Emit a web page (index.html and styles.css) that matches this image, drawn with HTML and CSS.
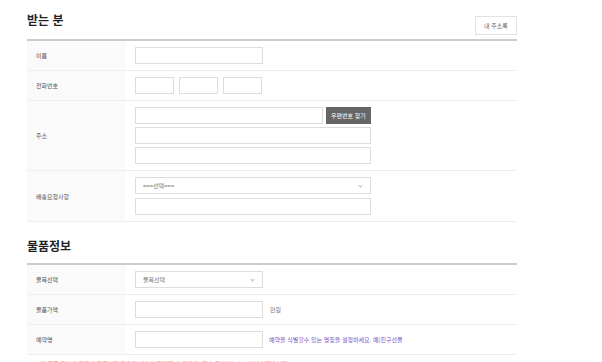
FILE: index.html
```html
<!DOCTYPE html>
<html lang="ko">
<head>
    <meta charset="UTF-8">
    <meta name="viewport" content="width=device-width, initial-scale=1.0">
    <title>받는 분</title>
    <link rel="stylesheet" href="styles.css">
</head>
<body>

    <div class="wrap">
        <div class="sec-head">
            <h2>받는 분</h2>
            <button class="btn-line">내 주소록</button>
        </div>

        <div class="form-table">
            <div class="row">
                <div class="label">이름</div>
                <div class="field">
                    <input type="text" class="w-mid">
                </div>
            </div>
            <div class="row">
                <div class="label">전화번호</div>
                <div class="field">
                    <div class="inline">
                        <input type="text" class="w-tel">
                        <input type="text" class="w-tel">
                        <input type="text" class="w-tel">
                    </div>
                </div>
            </div>
            <div class="row">
                <div class="label">주소</div>
                <div class="field">
                    <div class="inline tight">
                        <input type="text" class="w-zip">
                        <button class="btn-dark">우편번호 찾기</button>
                    </div>
                    <input type="text" class="w-long">
                    <input type="text" class="w-long">
                </div>
            </div>
            <div class="row">
                <div class="label">배송요청사항</div>
                <div class="field loose">
                    <div class="select w-long">===선택===</div>
                    <input type="text" class="w-long">
                </div>
            </div>
        </div>

        <div class="sec-head second">
            <h2>물품정보</h2>
        </div>

        <div class="form-table">
            <div class="row">
                <div class="label">물목선택</div>
                <div class="field">
                    <div class="select w-mid">물목선택</div>
                </div>
            </div>
            <div class="row">
                <div class="label">물품가액</div>
                <div class="field">
                    <div class="inline">
                        <input type="text" class="w-mid">
                        <span class="unit">만원</span>
                    </div>
                </div>
            </div>
            <div class="row">
                <div class="label">예약명</div>
                <div class="field">
                    <div class="inline">
                        <input type="text" class="w-mid">
                        <span class="hint">예약을 식별할수 있는 명칭을 설정하세요. 예)친구선물</span>
                    </div>
                </div>
            </div>
        </div>

        <p class="notice">※ 물품 정보를 정확히 입력하지 않으면 배송이 지연될 수 있으며, 파손 및 분실 시 보상이 어렵습니다.</p>
    </div>

</body>
</html>
```

FILE: styles.css
```css
body {
    margin: 0;
    padding: 0;
    background-color: #ffffff;
    font-family: "Noto Sans CJK KR", "Noto Sans", sans-serif;
    color: #666666;
}

.wrap {
    width: 490px;
    margin-left: 27px;
}

.sec-head {
    display: flex;
    justify-content: space-between;
    align-items: flex-end;
    height: 37px;
    padding-bottom: 2px;
    border-bottom: 2px solid #cccccc;
}

.sec-head.second {
    height: 35px;
    padding-bottom: 6px;
}

h2 {
    margin: 0;
    font-size: 12px;
    font-weight: bold;
    color: #222222;
    line-height: 14px;
    padding-bottom: 10px;
}

.second h2 {
    padding-bottom: 4px;
}

.btn-line {
    width: 42px;
    height: 19px;
    margin-bottom: 2px;
    background-color: #ffffff;
    border: 1px solid #e2e2e2;
    font-family: inherit;
    font-size: 6px;
    color: #666666;
    padding: 0;
}

.row {
    display: flex;
    border-bottom: 1px solid #eeeeee;
}

.label {
    width: 89px;
    flex-shrink: 0;
    padding-left: 9px;
    background-color: #fafafa;
    display: flex;
    align-items: center;
    font-size: 6px;
    color: #555555;
}

.field {
    display: flex;
    flex-direction: column;
    gap: 3px;
    padding: 6px 10px 6px 10px;
}

.field.loose {
    gap: 4px;
}

.inline {
    display: flex;
    align-items: center;
    gap: 5px;
}

.inline.tight {
    gap: 3px;
}

input,
.select {
    box-sizing: border-box;
    height: 17px;
    margin: 0;
    border: 1px solid #dddddd;
    background-color: #ffffff;
    font-family: inherit;
    font-size: 6px;
}

.w-mid { width: 128px; }
.w-tel { width: 39px; }
.w-zip { width: 188px; }
.w-long { width: 236px; }

.select {
    position: relative;
    display: flex;
    align-items: center;
    padding-left: 7px;
    color: #777777;
}

.select::after {
    content: "";
    position: absolute;
    right: 8px;
    top: 6px;
    width: 2px;
    height: 2px;
    border-right: 1px solid #bbbbbb;
    border-bottom: 1px solid #bbbbbb;
    transform: rotate(45deg);
}

.btn-dark {
    height: 17px;
    padding: 0 5px;
    border: none;
    background-color: #666666;
    color: #ffffff;
    font-family: inherit;
    font-size: 6px;
}

.unit {
    font-size: 6px;
    color: #777777;
    margin-left: 2px;
}

.hint {
    font-size: 6px;
    color: #7a55c2;
    margin-left: 1px;
}

.notice {
    margin: 4px 0 0 13px;
    font-size: 6px;
    color: #ff7a7a;
}
```
